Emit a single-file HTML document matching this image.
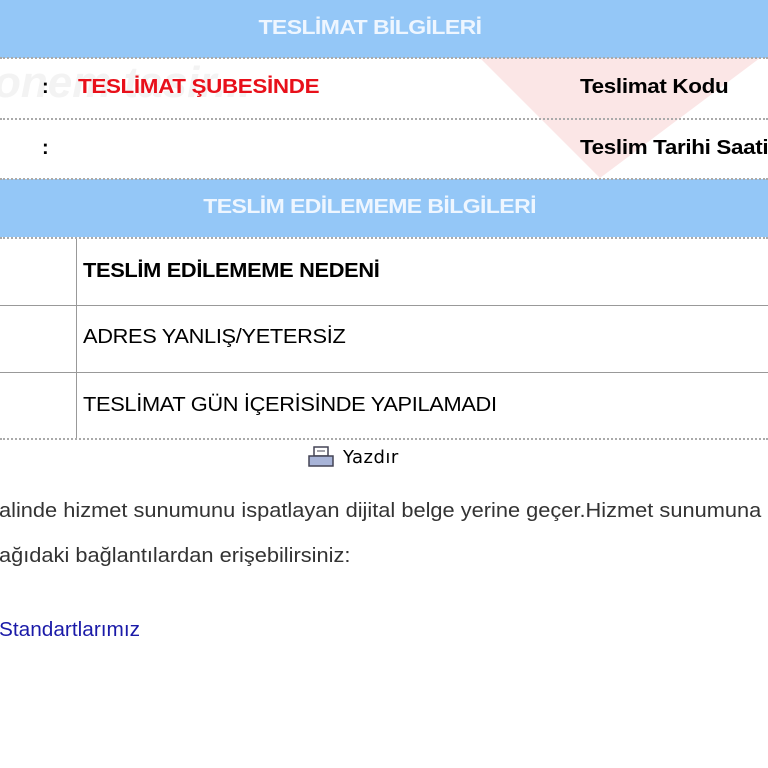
<!DOCTYPE html>
<html><head><meta charset="utf-8"><style>
body{margin:0;width:768px;height:768px;overflow:hidden;background:#fff;font-family:"Liberation Sans",Arial,sans-serif;position:relative}
.hd{position:absolute;left:0;width:740px;padding-right:28px;height:58px;background:#94c7f7;color:#eef6ff;font-weight:bold;font-size:20px;text-align:center;line-height:56px;letter-spacing:-0.5px}
.hd span{display:inline-block;transform:scaleX(1.15)}
.dot{position:absolute;left:0;width:768px;border-top:2px dotted #aaa}
.t{position:absolute;white-space:nowrap;transform-origin:left center}
.b{transform:scaleX(1.12)}
.n{transform:scaleX(1.09)}
.sl{position:absolute;left:0;width:768px;border-top:1px solid #999}
</style></head><body>
<svg style="position:absolute;left:0;top:58px" width="768" height="120"><polygon points="480,0 760,0 600,120" fill="#fbe6e6"/></svg>
<div class="t" style="left:-6px;top:58px;font-size:44px;font-style:italic;color:#f3f3f3;font-weight:bold">onem tasir...</div>
<div class="hd" style="top:0"><span>TESLİMAT BİLGİLERİ</span></div>
<div class="dot" style="top:57px"></div>
<div class="t" style="left:42px;top:76px;font-size:20px;font-weight:bold">:</div>
<div class="t b" style="left:78px;top:76px;font-size:20px;color:#e8101a;font-weight:bold;letter-spacing:-0.3px">TESLİMAT ŞUBESİNDE</div>
<div class="t b" style="left:580px;top:76px;font-size:20px;font-weight:bold;letter-spacing:-0.3px">Teslimat Kodu</div>
<div class="dot" style="top:118px"></div>
<div class="t" style="left:42px;top:137px;font-size:20px;font-weight:bold">:</div>
<div class="t b" style="left:580px;top:137px;font-size:20px;font-weight:bold;letter-spacing:-0.3px">Teslim Tarihi Saati</div>
<div class="hd" style="top:179px;height:58px"><span>TESLİM EDİLEMEME BİLGİLERİ</span></div>
<div class="dot" style="top:178px"></div>
<div class="dot" style="top:237px"></div>
<div style="position:absolute;left:76px;top:239px;height:200px;border-left:1px solid #999"></div>
<div class="t n" style="left:83px;top:260px;font-size:20px;font-weight:bold;letter-spacing:-0.3px">TESLİM EDİLEMEME NEDENİ</div>
<div class="sl" style="top:305px"></div>
<div class="t n" style="left:83px;top:326px;font-size:20px;letter-spacing:-0.3px">ADRES YANLIŞ/YETERSİZ</div>
<div class="sl" style="top:372px"></div>
<div class="t n" style="left:83px;top:394px;font-size:20px;letter-spacing:-0.3px">TESLİMAT GÜN İÇERİSİNDE YAPILAMADI</div>
<div class="dot" style="top:438px"></div>
<svg style="position:absolute;left:308px;top:446px" width="26" height="22"><rect x="6" y="1" width="14" height="9" fill="#fff" stroke="#445" stroke-width="1.5"/><line x1="9" y1="5" x2="17" y2="5" stroke="#445"/><rect x="1" y="10" width="24" height="10" fill="#a8b4d8" stroke="#445" stroke-width="1.5"/></svg>
<div class="t" style="left:343px;top:447px;font-size:18px;font-family:'DejaVu Sans',sans-serif;letter-spacing:0.5px">Yazdır</div>
<div class="t n" style="left:-1px;top:500px;font-size:20px;color:#333">alinde hizmet sunumunu ispatlayan dijital belge yerine geçer.Hizmet sunumuna</div>
<div class="t n" style="left:-1px;top:545px;font-size:20px;color:#333">ağıdaki bağlantılardan erişebilirsiniz:</div>
<div class="t" style="left:-1px;top:619px;font-size:20px;color:#1a1aa8;transform:scaleX(1.04)">Standartlarımız</div>
</body></html>
